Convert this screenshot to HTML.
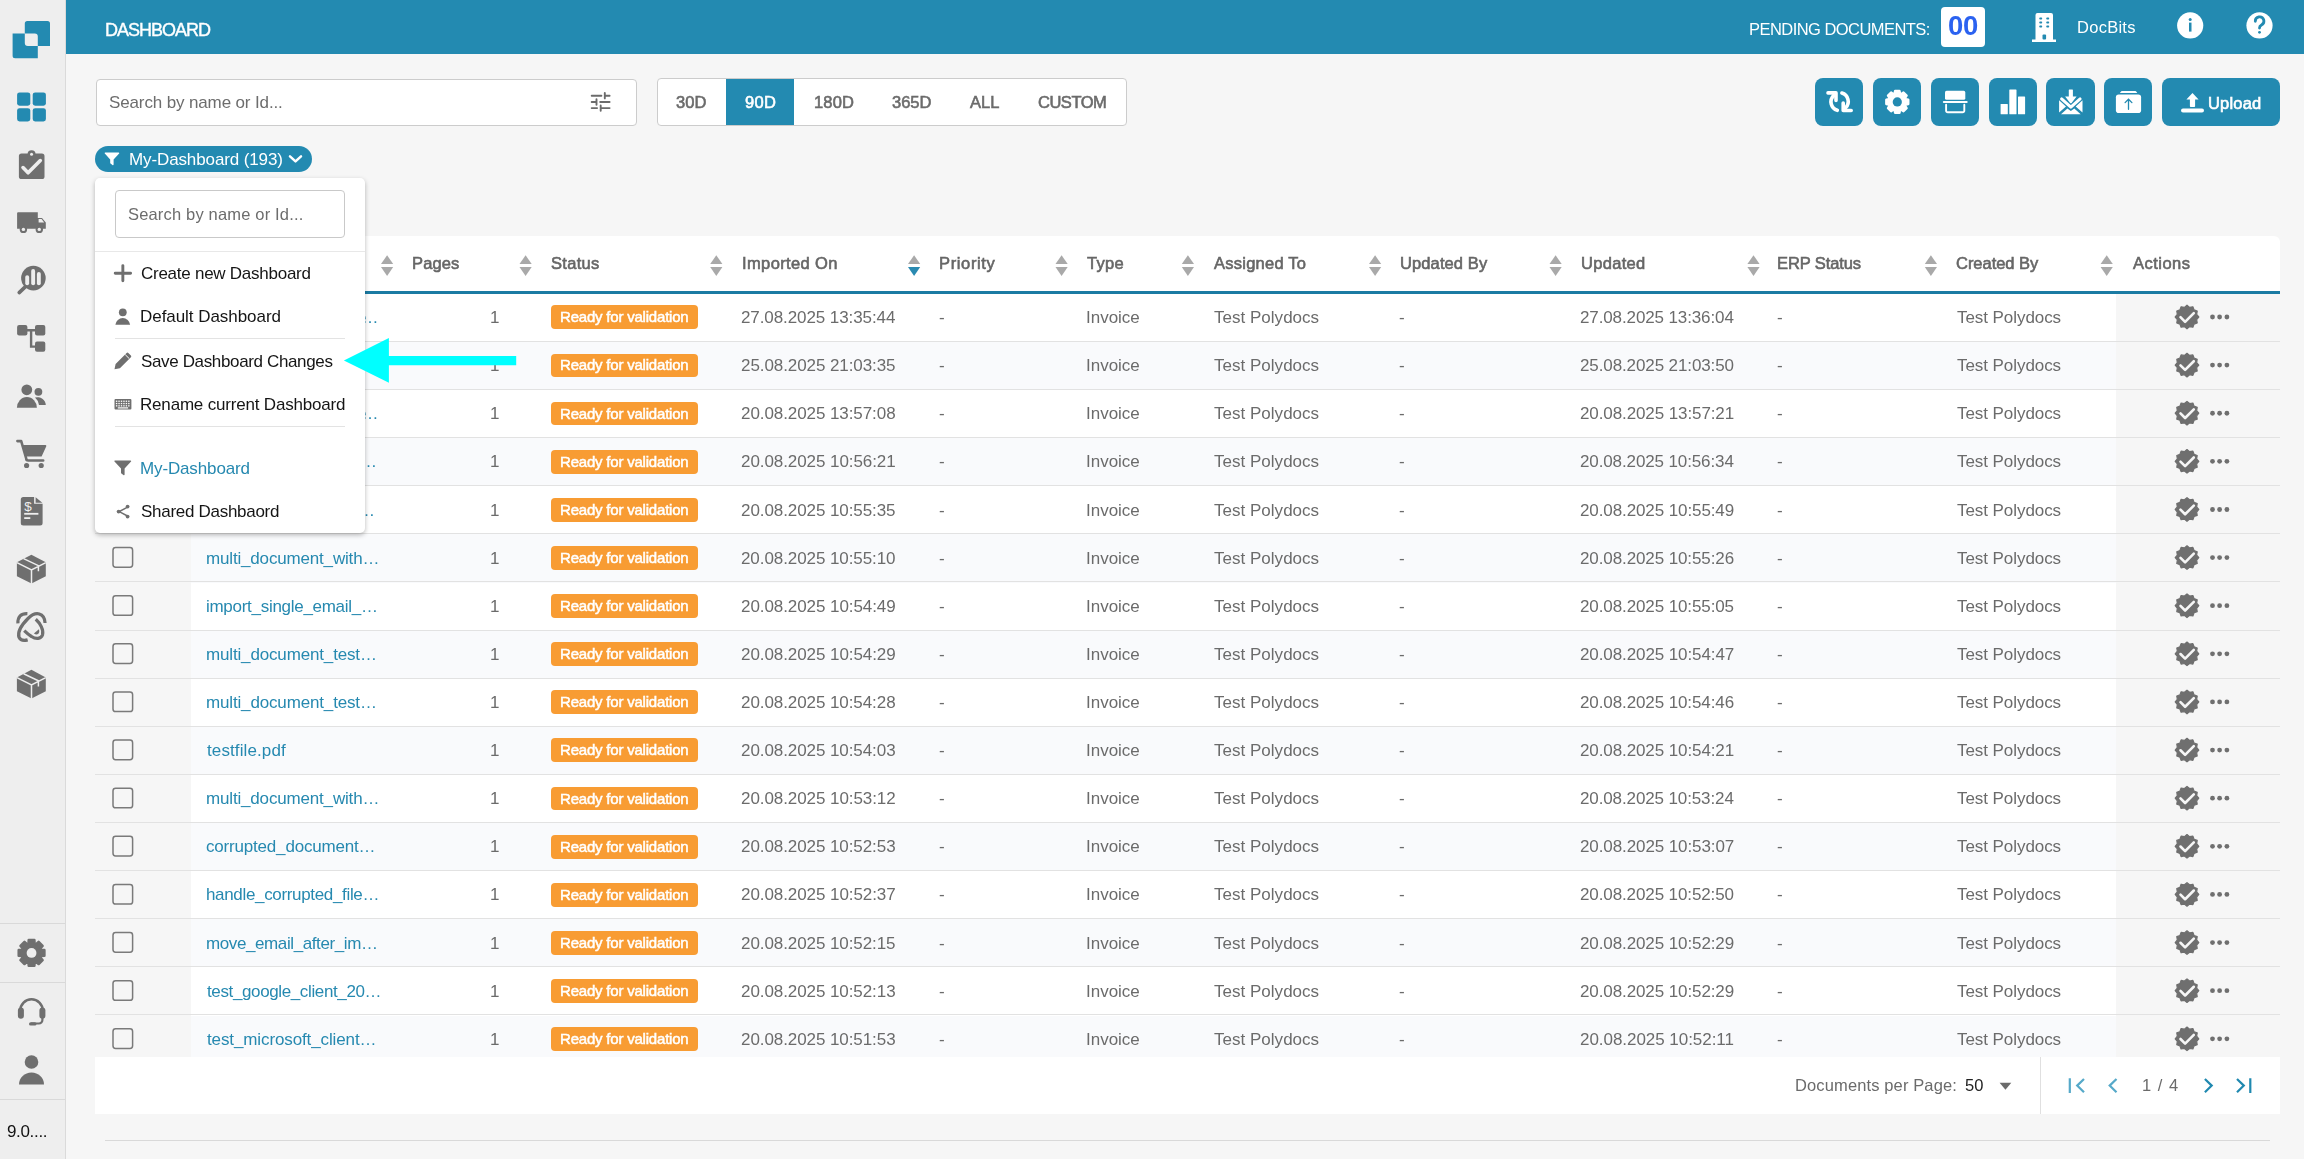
<!DOCTYPE html><html><head><meta charset="utf-8"><style>
*{box-sizing:border-box;margin:0;padding:0}
html,body{width:2304px;height:1159px;overflow:hidden}
body{background:#f6f6f6;font-family:"Liberation Sans",sans-serif;position:relative}
.a{position:absolute}
.t{position:absolute;white-space:nowrap;will-change:transform}
svg.i{position:absolute;overflow:visible;left:0;top:0}
</style></head><body>
<div class="a" style="left:0px;top:0px;width:65px;height:1159px;background:#eeeeee;"></div>
<div class="a" style="left:65px;top:0px;width:1px;height:1159px;background:#dadada;"></div>
<div class="a" style="left:0px;top:923px;width:65px;height:1px;background:#d9d9d9;"></div>
<div class="a" style="left:0px;top:982px;width:65px;height:1px;background:#d9d9d9;"></div>
<div class="a" style="left:0px;top:1099px;width:65px;height:1px;background:#d9d9d9;"></div>
<div class="a" style="left:66px;top:0px;width:2238px;height:54px;background:#238ab1;"></div>
<svg class="i" width="66" height="1159"><path fill="#238ab1" d="M24.8 23.5 a2.5 2.5 0 0 1 2.5-2.5 H47.5 a2.5 2.5 0 0 1 2.5 2.5 V46 H37.8 V36.5 a3 3 0 0 0 -3 -3 H24.8 Z"/><path fill="#238ab1" d="M12.6 33.5 H24.8 V43 a3 3 0 0 0 3 3 H37.8 V58.3 H15.1 a2.5 2.5 0 0 1 -2.5 -2.5 Z"/><rect x="17.1" y="92.4" width="13.2" height="13.3" rx="2.4" fill="#238ab1"/><rect x="17.1" y="108.2" width="13.2" height="13.3" rx="2.4" fill="#238ab1"/><rect x="32.7" y="92.4" width="13.2" height="13.3" rx="2.4" fill="#238ab1"/><rect x="32.7" y="108.2" width="13.2" height="13.3" rx="2.4" fill="#238ab1"/><rect x="18.9" y="153.4" width="25.6" height="25.6" rx="2.6" fill="#6f6f6f"/><circle cx="31.55" cy="154.2" r="4" fill="#6f6f6f"/><circle cx="31.55" cy="154.2" r="1.5" fill="#eeeeee"/><path d="M23 167.6 L28.1 172.8 L40.3 160.6" fill="none" stroke="#eeeeee" stroke-width="3.6" stroke-linecap="round" stroke-linejoin="round"/><path fill="#6f6f6f" d="M17.1 213.2 a1 1 0 0 1 1 -1 H37.8 V218 H42 L45.8 222.5 V228.8 H17.1 Z"/><path fill="#eeeeee" d="M38.6 219 H41.6 L44.2 222.6 H38.6 Z"/><circle cx="23.4" cy="229.4" r="3.7" fill="#6f6f6f"/><circle cx="23.4" cy="229.4" r="1.7" fill="#eeeeee"/><circle cx="39.3" cy="229.4" r="3.7" fill="#6f6f6f"/><circle cx="39.3" cy="229.4" r="1.7" fill="#eeeeee"/><circle cx="33.4" cy="278.1" r="12.3" fill="#6f6f6f"/><line x1="19.2" y1="292.6" x2="25.5" y2="286.6" stroke="#6f6f6f" stroke-width="3.6" stroke-linecap="round"/><line x1="27.2" y1="277.1" x2="27.2" y2="283.2" stroke="#eeeeee" stroke-width="3.9" stroke-linecap="round"/><line x1="33.15" y1="271" x2="33.15" y2="283.2" stroke="#eeeeee" stroke-width="3.9" stroke-linecap="round"/><line x1="38.85" y1="274" x2="38.85" y2="283.2" stroke="#eeeeee" stroke-width="3.9" stroke-linecap="round"/><rect x="17.1" y="325.1" width="10.3" height="10.3" rx="2" fill="#6f6f6f"/><rect x="35" y="325.1" width="10.3" height="10.3" rx="2" fill="#6f6f6f"/><rect x="35" y="341.5" width="10.3" height="10.3" rx="2" fill="#6f6f6f"/><path d="M27 330.3 H35.5 M31.1 330.3 V346.6 H35.5" fill="none" stroke="#6f6f6f" stroke-width="2.4"/><circle cx="26.8" cy="389.8" r="5.4" fill="#6f6f6f"/><path fill="#6f6f6f" d="M16.9 407.8 a10 10.8 0 0 1 20 0 Z"/><circle cx="38.4" cy="391.8" r="3.9" fill="#6f6f6f"/><path fill="#6f6f6f" d="M35 397.6 a8.2 8 0 0 1 10.8 7.4 H39 a11.8 11.8 0 0 0 -4 -7.4 Z"/><path d="M17.4 441.1 H21.2 L26.2 458.5 a2 2 0 0 0 2 2 H43.2" fill="none" stroke="#6f6f6f" stroke-width="2.6" stroke-linecap="round" stroke-linejoin="round"/><path fill="#6f6f6f" d="M22.6 445 H45.3 a1 1 0 0 1 1 1.2 L41.6 456.6 H25.6 Z"/><circle cx="26.6" cy="465.5" r="2.6" fill="#6f6f6f"/><circle cx="41.2" cy="465.5" r="2.6" fill="#6f6f6f"/><path fill="#6f6f6f" d="M23.3 496.9 H34.1 V503.8 H42.6 V523 a2.5 2.5 0 0 1 -2.5 2.5 H23.3 a2.5 2.5 0 0 1 -2.5 -2.5 V499.4 a2.5 2.5 0 0 1 2.5 -2.5 Z"/><path fill="#6f6f6f" d="M35.6 497.3 L42.3 502.8 H35.6 Z"/><text x="24.3" y="510.5" font-family="Liberation Sans" font-size="13.5" fill="#eeeeee">$</text><rect x="24.2" y="512.9" width="14.2" height="1.8" fill="#eeeeee"/><rect x="24.2" y="517.2" width="6.1" height="1.8" fill="#eeeeee"/><path fill="#6f6f6f" d="M31.4 554.7 L45.8 562.3 V576.2 L31.5 583.5 L16.9 576.2 V562.3 Z"/><path d="M16.9 562.6 L31.5 569.8 L45.8 562.6 M31.5 569.8 V584 M23.6 558.6 L38.4 565.6 V571.3" fill="none" stroke="#eeeeee" stroke-width="1.5"/><path fill="#6f6f6f" d="M31.4 669.8000000000001 L45.8 677.4 V691.3000000000001 L31.5 698.6 L16.9 691.3000000000001 V677.4 Z"/><path d="M16.9 677.7 L31.5 684.9 L45.8 677.7 M31.5 684.9 V699.1 M23.6 673.7 L38.4 680.7 V686.4" fill="none" stroke="#eeeeee" stroke-width="1.5"/><path d="M27.4 613.6 C21 613.3 17.6 616.5 17.9 623.4" fill="none" stroke="#6f6f6f" stroke-width="3.2" stroke-linecap="butt"/><path d="M45.06 622.98 C44.5 613 36 610.5 28 618.5 C22 624.5 17.3 632 19 637.3 C20.6 640.6 24.5 640.8 27.66 639.9" fill="none" stroke="#6f6f6f" stroke-width="3.2"/><path d="M35.74 619.25 C40 623 44 630 42.5 635 C41 639 36 639.5 31.5 636.5 C28 634.5 25.5 632 24.25 630.74" fill="none" stroke="#6f6f6f" stroke-width="3.2"/><path fill="#6f6f6f" d="M33.9 633.6 L38.85 629.3 C40.2 632.5 38 636.2 33.9 633.6 Z"/><path fill="#6f6f6f" stroke="#6f6f6f" stroke-width="2.6" stroke-linejoin="round" d="M41.31 949.99 L44.35 950.14 L44.35 955.76 L41.31 955.91 L40.55 957.76 L42.58 960.01 L38.61 963.98 L36.36 961.95 L34.51 962.71 L34.36 965.75 L28.74 965.75 L28.59 962.71 L26.74 961.95 L24.49 963.98 L20.52 960.01 L22.55 957.76 L21.79 955.91 L18.75 955.76 L18.75 950.14 L21.79 949.99 L22.55 948.14 L20.52 945.89 L24.49 941.92 L26.74 943.95 L28.59 943.19 L28.74 940.15 L34.36 940.15 L34.51 943.19 L36.36 943.95 L38.61 941.92 L42.58 945.89 L40.55 948.14 Z"/><circle cx="31.55" cy="952.95" r="4.9" fill="#eeeeee"/><path d="M20.3 1014 V1010.5 a11.2 11.2 0 0 1 22.4 0 V1014" fill="none" stroke="#6f6f6f" stroke-width="2.6"/><rect x="17.9" y="1007.5" width="6" height="11.2" rx="3" fill="#6f6f6f"/><rect x="39.4" y="1007.5" width="6" height="11.2" rx="3" fill="#6f6f6f"/><path d="M42.4 1017 V1020 a3.5 3.5 0 0 1 -3.5 3.5 H31" fill="none" stroke="#6f6f6f" stroke-width="2.2"/><rect x="29" y="1022.2" width="7.5" height="3.4" rx="1.7" fill="#6f6f6f"/><circle cx="31.5" cy="1062" r="6.8" fill="#6f6f6f"/><path fill="#6f6f6f" d="M19 1084.4 a12.5 12 0 0 1 25 0 Z"/></svg>
<div class="t " style="left:7.05px;top:1120px;font-size:17px;line-height:24px;color:#111111;letter-spacing:-0.338px;">9.0....</div>
<div class="t " style="left:104.72px;top:17px;font-size:18px;line-height:26px;color:#ffffff;letter-spacing:-1.010px;-webkit-text-stroke:0.4px #ffffff;">DASHBOARD</div>
<div class="t " style="left:1749.15px;top:17px;font-size:16.5px;line-height:24px;color:#ffffff;letter-spacing:-0.548px;">PENDING DOCUMENTS:</div>
<div class="a" style="left:1941px;top:7px;width:44px;height:40px;background:#ffffff;border-radius:4px"></div>
<div class="t " style="left:1947.91px;top:6px;font-size:27.5px;line-height:39px;color:#2b62f0;letter-spacing:-0.373px;font-weight:bold;">00</div>
<div class="t " style="left:2077.15px;top:15px;font-size:16.5px;line-height:24px;color:#ffffff;letter-spacing:0.267px;">DocBits</div>
<svg class="i" width="2304" height="60"><path fill="#fff" d="M2035.5 15 a2 2 0 0 1 2 -2 H2051 a2 2 0 0 1 2 2 V39.4 H2056 V41.9 H2032 V39.4 H2035.5 Z"/><rect x="2039.2" y="17.6" width="3" height="1.9" rx="0.9" fill="#238ab1"/><rect x="2046.2" y="17.6" width="3" height="1.9" rx="0.9" fill="#238ab1"/><rect x="2039.2" y="21.6" width="3" height="1.9" rx="0.9" fill="#238ab1"/><rect x="2046.2" y="21.6" width="3" height="1.9" rx="0.9" fill="#238ab1"/><rect x="2039.2" y="25.6" width="3" height="1.9" rx="0.9" fill="#238ab1"/><rect x="2046.2" y="25.6" width="3" height="1.9" rx="0.9" fill="#238ab1"/><rect x="2042.5" y="34.6" width="3.6" height="4.8" rx="1" fill="#238ab1"/><circle cx="2190.2" cy="25.4" r="13.1" fill="#fff"/><circle cx="2190.2" cy="19.6" r="1.5" fill="#238ab1"/><rect x="2189" y="22.6" width="2.5" height="9" fill="#238ab1"/><circle cx="2259.5" cy="25.4" r="13.1" fill="#fff"/><path d="M2255.3 21.3 a4.3 4.3 0 1 1 6.2 3.7 c-1.4 0.8 -2 1.5 -2 3.1" fill="none" stroke="#238ab1" stroke-width="2.8" stroke-linecap="round"/><circle cx="2259.5" cy="32.3" r="1.4" fill="#238ab1"/></svg>
<div class="a" style="left:95.5px;top:78.5px;width:541px;height:47px;background:#ffffff;border:1px solid #cccccc;border-radius:4px"></div>
<div class="t " style="left:109.23px;top:91px;font-size:17px;line-height:24px;color:#6d6d6d;letter-spacing:-0.131px;">Search by name or Id...</div>
<svg class="i" width="2304" height="140"><path d="M591.7 95.7 H601.4 M604.8 93 V98.4 M604.8 95.7 H609.6 M591.7 102 H596.5 M596.5 99.2 V104.7 M600.2 102 H609.6 M591.7 108.1 H597.1 M600.7 105.4 V110.8 M600.7 108.1 H609.6" fill="none" stroke="#6b6b6b" stroke-width="1.9" stroke-linecap="round"/></svg>
<div class="a" style="left:656.5px;top:78.2px;width:470.5px;height:47.4px;background:#ffffff;border:1px solid #cccccc;border-radius:4px"></div>
<div class="a" style="left:725.8px;top:79.2px;width:68.6px;height:45.4px;background:#238ab1;"></div>
<div class="t " style="left:676.17px;top:90px;font-size:16.5px;line-height:24px;color:#6b6b6b;letter-spacing:0.025px;-webkit-text-stroke:0.6px #6b6b6b;">30D</div>
<div class="t " style="left:744.53px;top:90px;font-size:16.5px;line-height:24px;color:#ffffff;letter-spacing:0.347px;-webkit-text-stroke:0.6px #ffffff;">90D</div>
<div class="t " style="left:813.54px;top:90px;font-size:16.5px;line-height:24px;color:#6b6b6b;letter-spacing:0.167px;-webkit-text-stroke:0.6px #6b6b6b;">180D</div>
<div class="t " style="left:892.17px;top:90px;font-size:16.5px;line-height:24px;color:#6b6b6b;letter-spacing:-0.042px;-webkit-text-stroke:0.6px #6b6b6b;">365D</div>
<div class="t " style="left:970.27px;top:90px;font-size:16.5px;line-height:24px;color:#6b6b6b;letter-spacing:0.061px;-webkit-text-stroke:0.6px #6b6b6b;">ALL</div>
<div class="t " style="left:1038.46px;top:90px;font-size:16.5px;line-height:24px;color:#6b6b6b;letter-spacing:-0.481px;-webkit-text-stroke:0.6px #6b6b6b;">CUSTOM</div>
<div class="a" style="left:1815.2px;top:78px;width:48.2px;height:48.2px;background:#238ab1;border-radius:8px"></div>
<div class="a" style="left:1873.0px;top:78px;width:48.2px;height:48.2px;background:#238ab1;border-radius:8px"></div>
<div class="a" style="left:1930.9px;top:78px;width:48.2px;height:48.2px;background:#238ab1;border-radius:8px"></div>
<div class="a" style="left:1988.7px;top:78px;width:48.2px;height:48.2px;background:#238ab1;border-radius:8px"></div>
<div class="a" style="left:2046.4px;top:78px;width:48.2px;height:48.2px;background:#238ab1;border-radius:8px"></div>
<div class="a" style="left:2104.1px;top:78px;width:48.2px;height:48.2px;background:#238ab1;border-radius:8px"></div>
<div class="a" style="left:2162px;top:78px;width:118px;height:48.2px;background:#238ab1;border-radius:8px"></div>
<svg class="i" width="2304" height="140"><path d="M1837.3 110.3 A8.8 8.8 0 0 1 1833.6 95.6" fill="none" stroke="#fff" stroke-width="3.6" stroke-linecap="round"/><path fill="#fff" d="M1828 91.1 H1836 a1.8 1.8 0 0 1 1.8 1.8 V100.4 a1.8 1.8 0 0 1 -3.6 0 V94.7 H1828 a1.8 1.8 0 0 1 0 -3.6 Z"/><g transform="rotate(180 1839.6 101.7)"><path d="M1837.3 110.3 A8.8 8.8 0 0 1 1833.6 95.6" fill="none" stroke="#fff" stroke-width="3.6" stroke-linecap="round"/><path fill="#fff" d="M1828 91.1 H1836 a1.8 1.8 0 0 1 1.8 1.8 V100.4 a1.8 1.8 0 0 1 -3.6 0 V94.7 H1828 a1.8 1.8 0 0 1 0 -3.6 Z"/></g><path fill="#fff" stroke="#fff" stroke-width="2.4" stroke-linejoin="round" d="M1894.62 93.41 L1895.11 90.92 L1899.49 90.92 L1899.98 93.41 L1901.40 94.00 L1903.52 92.59 L1906.61 95.68 L1905.20 97.80 L1905.79 99.22 L1908.28 99.71 L1908.28 104.09 L1905.79 104.58 L1905.20 106.00 L1906.61 108.12 L1903.52 111.21 L1901.40 109.80 L1899.98 110.39 L1899.49 112.88 L1895.11 112.88 L1894.62 110.39 L1893.20 109.80 L1891.08 111.21 L1887.99 108.12 L1889.40 106.00 L1888.81 104.58 L1886.32 104.09 L1886.32 99.71 L1888.81 99.22 L1889.40 97.80 L1887.99 95.68 L1891.08 92.59 L1893.20 94.00 Z"/><circle cx="1897.3" cy="101.9" r="4.6" fill="#238ab1"/><rect x="1945" y="90.8" width="20.3" height="9" rx="1.6" fill="#fff"/><rect x="1942.8" y="101" width="24.9" height="2.1" rx="1" fill="#fff"/><path d="M1946.1 104.8 V110.7 a1.6 1.6 0 0 0 1.6 1.6 H1962.7 a1.6 1.6 0 0 0 1.6 -1.6 V104.8" fill="none" stroke="#fff" stroke-width="1.9" stroke-linecap="round"/><rect x="2000.6" y="103.9" width="7.2" height="10.4" rx="0.6" fill="#fff"/><rect x="2009.3" y="89.5" width="7.2" height="24.8" rx="0.6" fill="#fff"/><rect x="2018" y="96.5" width="7.1" height="17.8" rx="0.6" fill="#fff"/><path fill="#fff" d="M2069.3 89.6 H2072.4 a0.5 0.5 0 0 1 0.5 0.5 V96.6 H2076.6 L2071.6 102.9 a1 1 0 0 1 -1.5 0 L2065.1 96.6 H2068.8 V90.1 a0.5 0.5 0 0 1 0.5 -0.5 Z"/><path d="M2061.6 98.9 L2070.85 107.2 L2080.1 98.9" fill="none" stroke="#fff" stroke-width="3" stroke-linejoin="round" stroke-linecap="round"/><path fill="#fff" d="M2059.1 100.3 L2066 106.4 L2059.1 112.6 Z M2082.5 100.3 L2075.7 106.4 L2082.5 112.6 Z M2061 114.3 L2067.4 108.4 L2070.85 111 L2074.3 108.4 L2080.7 114.3 Z"/><path fill="#fff" d="M2121.8 91 H2135.4 a1 1 0 0 1 0.8 0.4 L2137.3 93 H2119.9 L2121 91.4 a1 1 0 0 1 0.8 -0.4 Z"/><rect x="2115.9" y="94.4" width="25.2" height="18.6" rx="2.8" fill="#fff"/><path d="M2128.5 109.3 V99.4 M2125.1 102.6 L2128.5 99.2 L2131.9 102.6" fill="none" stroke="#238ab1" stroke-width="1.3" stroke-linecap="round"/><path fill="#fff" d="M2192.5 93 L2198.6 99.4 H2195.1 V106.2 a0.8 0.8 0 0 1 -0.8 0.8 H2190.7 a0.8 0.8 0 0 1 -0.8 -0.8 V99.4 H2186.4 Z"/><rect x="2181" y="108.6" width="23" height="4" rx="2" fill="#fff"/></svg>
<div class="t " style="left:2207.53px;top:91px;font-size:16.5px;line-height:24px;color:#ffffff;letter-spacing:0.190px;-webkit-text-stroke:0.6px #ffffff;">Upload</div>
<div class="a" style="left:95px;top:145.5px;width:217px;height:26.5px;background:#238ab1;border-radius:13.25px"></div>
<svg class="i" width="2304" height="200"><path fill="#fff" d="M104.6 153.2 a0.6 0.6 0 0 1 0.6 -0.6 H118.7 a0.6 0.6 0 0 1 0.45 1 L113.6 159.6 V164.4 a0.8 0.8 0 0 1 -1.2 0.6 L110.6 163.6 a0.8 0.8 0 0 1 -0.4 -0.7 V159.6 L104.8 153.6 Z"/><path d="M290 156.4 L295.5 161.4 L301 156.4" fill="none" stroke="#fff" stroke-width="2.5" stroke-linecap="round" stroke-linejoin="round"/></svg>
<div class="t " style="left:128.61px;top:148px;font-size:17px;line-height:24px;color:#ffffff;letter-spacing:-0.115px;">My-Dashboard (193)</div>
<div class="a" style="left:95px;top:235.5px;width:2185px;height:878.8px;background:#ffffff;border-radius:6px 6px 0 0"></div>
<div class="t " style="left:411.95px;top:251px;font-size:16.5px;line-height:24px;color:#666666;letter-spacing:0.141px;-webkit-text-stroke:0.6px #666666;">Pages</div>
<div class="t " style="left:550.55px;top:251px;font-size:16.5px;line-height:24px;color:#666666;letter-spacing:0.294px;-webkit-text-stroke:0.6px #666666;">Status</div>
<div class="t " style="left:741.78px;top:251px;font-size:16.5px;line-height:24px;color:#666666;letter-spacing:0.379px;-webkit-text-stroke:0.6px #666666;">Imported On</div>
<div class="t " style="left:938.95px;top:251px;font-size:16.5px;line-height:24px;color:#666666;letter-spacing:0.636px;-webkit-text-stroke:0.6px #666666;">Priority</div>
<div class="t " style="left:1086.93px;top:251px;font-size:16.5px;line-height:24px;color:#666666;letter-spacing:0.274px;-webkit-text-stroke:0.6px #666666;">Type</div>
<div class="t " style="left:1213.77px;top:251px;font-size:16.5px;line-height:24px;color:#666666;letter-spacing:0.241px;-webkit-text-stroke:0.6px #666666;">Assigned To</div>
<div class="t " style="left:1399.53px;top:251px;font-size:16.5px;line-height:24px;color:#666666;letter-spacing:0.109px;-webkit-text-stroke:0.6px #666666;">Updated By</div>
<div class="t " style="left:1580.53px;top:251px;font-size:16.5px;line-height:24px;color:#666666;letter-spacing:0.309px;-webkit-text-stroke:0.6px #666666;">Updated</div>
<div class="t " style="left:1777.45px;top:251px;font-size:16.5px;line-height:24px;color:#666666;letter-spacing:-0.104px;-webkit-text-stroke:0.6px #666666;">ERP Status</div>
<div class="t " style="left:1955.96px;top:251px;font-size:16.5px;line-height:24px;color:#666666;letter-spacing:-0.030px;-webkit-text-stroke:0.6px #666666;">Created By</div>
<div class="t " style="left:2132.77px;top:251px;font-size:16.5px;line-height:24px;color:#666666;letter-spacing:0.487px;-webkit-text-stroke:0.6px #666666;">Actions</div>
<svg class="i" width="2304" height="1159"><path fill="#a9a9a9" d="M381 264.1 L387.1 255.3 L393.2 264.1 Z"/><path fill="#a9a9a9" d="M381 267.1 L387.1 275.9 L393.2 267.1 Z"/><path fill="#a9a9a9" d="M519.5 264.1 L525.6 255.3 L531.7 264.1 Z"/><path fill="#a9a9a9" d="M519.5 267.1 L525.6 275.9 L531.7 267.1 Z"/><path fill="#a9a9a9" d="M710.2 264.1 L716.3000000000001 255.3 L722.4000000000001 264.1 Z"/><path fill="#a9a9a9" d="M710.2 267.1 L716.3000000000001 275.9 L722.4000000000001 267.1 Z"/><path fill="#a9a9a9" d="M908 264.1 L914.1 255.3 L920.2 264.1 Z"/><path fill="#2a8ab1" d="M908 267.1 L914.1 275.9 L920.2 267.1 Z"/><path fill="#a9a9a9" d="M1055.5 264.1 L1061.6 255.3 L1067.7 264.1 Z"/><path fill="#a9a9a9" d="M1055.5 267.1 L1061.6 275.9 L1067.7 267.1 Z"/><path fill="#a9a9a9" d="M1181.8 264.1 L1187.8999999999999 255.3 L1194.0 264.1 Z"/><path fill="#a9a9a9" d="M1181.8 267.1 L1187.8999999999999 275.9 L1194.0 267.1 Z"/><path fill="#a9a9a9" d="M1369 264.1 L1375.1 255.3 L1381.2 264.1 Z"/><path fill="#a9a9a9" d="M1369 267.1 L1375.1 275.9 L1381.2 267.1 Z"/><path fill="#a9a9a9" d="M1549.5 264.1 L1555.6 255.3 L1561.7 264.1 Z"/><path fill="#a9a9a9" d="M1549.5 267.1 L1555.6 275.9 L1561.7 267.1 Z"/><path fill="#a9a9a9" d="M1747.4 264.1 L1753.5 255.3 L1759.6000000000001 264.1 Z"/><path fill="#a9a9a9" d="M1747.4 267.1 L1753.5 275.9 L1759.6000000000001 267.1 Z"/><path fill="#a9a9a9" d="M1924.8 264.1 L1930.8999999999999 255.3 L1937.0 264.1 Z"/><path fill="#a9a9a9" d="M1924.8 267.1 L1930.8999999999999 275.9 L1937.0 267.1 Z"/><path fill="#a9a9a9" d="M2100.6 264.1 L2106.7 255.3 L2112.7999999999997 264.1 Z"/><path fill="#a9a9a9" d="M2100.6 267.1 L2106.7 275.9 L2112.7999999999997 267.1 Z"/></svg>
<div class="a" style="left:95px;top:291px;width:2185px;height:3px;background:#1b7ba3;"></div>
<div class="a" style="left:95px;top:294px;width:2185px;height:762.5px;overflow:hidden">
<div class="a" style="left:0;top:-0.20px;width:2185px;height:48.12px;background:#ffffff"></div>
<div class="a" style="left:0;top:-0.20px;width:96px;height:48.12px;background:#f6f6f6"></div>
<div class="a" style="left:2021px;top:-0.20px;width:164px;height:48.12px;background:#f6f6f6"></div>
<div class="a" style="left:0;top:46.80px;width:2185px;height:1px;background:#e2e2e2"></div>
<div class="a" style="left:0;top:47.92px;width:2185px;height:48.12px;background:#f9fafc"></div>
<div class="a" style="left:0;top:47.92px;width:96px;height:48.12px;background:#f6f6f6"></div>
<div class="a" style="left:2021px;top:47.92px;width:164px;height:48.12px;background:#f6f6f6"></div>
<div class="a" style="left:0;top:94.92px;width:2185px;height:1px;background:#e2e2e2"></div>
<div class="a" style="left:0;top:96.04px;width:2185px;height:48.12px;background:#ffffff"></div>
<div class="a" style="left:0;top:96.04px;width:96px;height:48.12px;background:#f6f6f6"></div>
<div class="a" style="left:2021px;top:96.04px;width:164px;height:48.12px;background:#f6f6f6"></div>
<div class="a" style="left:0;top:143.04px;width:2185px;height:1px;background:#e2e2e2"></div>
<div class="a" style="left:0;top:144.16px;width:2185px;height:48.12px;background:#f9fafc"></div>
<div class="a" style="left:0;top:144.16px;width:96px;height:48.12px;background:#f6f6f6"></div>
<div class="a" style="left:2021px;top:144.16px;width:164px;height:48.12px;background:#f6f6f6"></div>
<div class="a" style="left:0;top:191.16px;width:2185px;height:1px;background:#e2e2e2"></div>
<div class="a" style="left:0;top:192.28px;width:2185px;height:48.12px;background:#ffffff"></div>
<div class="a" style="left:0;top:192.28px;width:96px;height:48.12px;background:#f6f6f6"></div>
<div class="a" style="left:2021px;top:192.28px;width:164px;height:48.12px;background:#f6f6f6"></div>
<div class="a" style="left:0;top:239.28px;width:2185px;height:1px;background:#e2e2e2"></div>
<div class="a" style="left:0;top:240.40px;width:2185px;height:48.12px;background:#f9fafc"></div>
<div class="a" style="left:0;top:240.40px;width:96px;height:48.12px;background:#f6f6f6"></div>
<div class="a" style="left:2021px;top:240.40px;width:164px;height:48.12px;background:#f6f6f6"></div>
<div class="a" style="left:0;top:287.40px;width:2185px;height:1px;background:#e2e2e2"></div>
<div class="a" style="left:0;top:288.52px;width:2185px;height:48.12px;background:#ffffff"></div>
<div class="a" style="left:0;top:288.52px;width:96px;height:48.12px;background:#f6f6f6"></div>
<div class="a" style="left:2021px;top:288.52px;width:164px;height:48.12px;background:#f6f6f6"></div>
<div class="a" style="left:0;top:335.52px;width:2185px;height:1px;background:#e2e2e2"></div>
<div class="a" style="left:0;top:336.64px;width:2185px;height:48.12px;background:#f9fafc"></div>
<div class="a" style="left:0;top:336.64px;width:96px;height:48.12px;background:#f6f6f6"></div>
<div class="a" style="left:2021px;top:336.64px;width:164px;height:48.12px;background:#f6f6f6"></div>
<div class="a" style="left:0;top:383.64px;width:2185px;height:1px;background:#e2e2e2"></div>
<div class="a" style="left:0;top:384.76px;width:2185px;height:48.12px;background:#ffffff"></div>
<div class="a" style="left:0;top:384.76px;width:96px;height:48.12px;background:#f6f6f6"></div>
<div class="a" style="left:2021px;top:384.76px;width:164px;height:48.12px;background:#f6f6f6"></div>
<div class="a" style="left:0;top:431.76px;width:2185px;height:1px;background:#e2e2e2"></div>
<div class="a" style="left:0;top:432.88px;width:2185px;height:48.12px;background:#f9fafc"></div>
<div class="a" style="left:0;top:432.88px;width:96px;height:48.12px;background:#f6f6f6"></div>
<div class="a" style="left:2021px;top:432.88px;width:164px;height:48.12px;background:#f6f6f6"></div>
<div class="a" style="left:0;top:479.88px;width:2185px;height:1px;background:#e2e2e2"></div>
<div class="a" style="left:0;top:481.00px;width:2185px;height:48.12px;background:#ffffff"></div>
<div class="a" style="left:0;top:481.00px;width:96px;height:48.12px;background:#f6f6f6"></div>
<div class="a" style="left:2021px;top:481.00px;width:164px;height:48.12px;background:#f6f6f6"></div>
<div class="a" style="left:0;top:528.00px;width:2185px;height:1px;background:#e2e2e2"></div>
<div class="a" style="left:0;top:529.12px;width:2185px;height:48.12px;background:#f9fafc"></div>
<div class="a" style="left:0;top:529.12px;width:96px;height:48.12px;background:#f6f6f6"></div>
<div class="a" style="left:2021px;top:529.12px;width:164px;height:48.12px;background:#f6f6f6"></div>
<div class="a" style="left:0;top:576.12px;width:2185px;height:1px;background:#e2e2e2"></div>
<div class="a" style="left:0;top:577.24px;width:2185px;height:48.12px;background:#ffffff"></div>
<div class="a" style="left:0;top:577.24px;width:96px;height:48.12px;background:#f6f6f6"></div>
<div class="a" style="left:2021px;top:577.24px;width:164px;height:48.12px;background:#f6f6f6"></div>
<div class="a" style="left:0;top:624.24px;width:2185px;height:1px;background:#e2e2e2"></div>
<div class="a" style="left:0;top:625.36px;width:2185px;height:48.12px;background:#f9fafc"></div>
<div class="a" style="left:0;top:625.36px;width:96px;height:48.12px;background:#f6f6f6"></div>
<div class="a" style="left:2021px;top:625.36px;width:164px;height:48.12px;background:#f6f6f6"></div>
<div class="a" style="left:0;top:672.36px;width:2185px;height:1px;background:#e2e2e2"></div>
<div class="a" style="left:0;top:673.48px;width:2185px;height:48.12px;background:#ffffff"></div>
<div class="a" style="left:0;top:673.48px;width:96px;height:48.12px;background:#f6f6f6"></div>
<div class="a" style="left:2021px;top:673.48px;width:164px;height:48.12px;background:#f6f6f6"></div>
<div class="a" style="left:0;top:720.48px;width:2185px;height:1px;background:#e2e2e2"></div>
<div class="a" style="left:0;top:721.60px;width:2185px;height:48.12px;background:#f9fafc"></div>
<div class="a" style="left:0;top:721.60px;width:96px;height:48.12px;background:#f6f6f6"></div>
<div class="a" style="left:2021px;top:721.60px;width:164px;height:48.12px;background:#f6f6f6"></div>
</div>
<div class="t " style="left:490.21px;top:306px;font-size:17px;line-height:24px;color:#6b6b6b;letter-spacing:0.000px;">1</div>
<div class="a" style="left:550.7px;top:305.4px;width:147.2px;height:23.8px;background:#f89c33;border-radius:4px"></div>
<div class="t " style="left:559.52px;top:306px;font-size:15px;line-height:21px;color:#ffffff;letter-spacing:-0.204px;-webkit-text-stroke:0.5px #ffffff;">Ready for validation</div>
<div class="t " style="left:740.65px;top:306px;font-size:17px;line-height:24px;color:#6b6b6b;letter-spacing:-0.090px;">27.08.2025 13:35:44</div>
<div class="t " style="left:939.24px;top:306px;font-size:17px;line-height:24px;color:#6b6b6b;letter-spacing:0.000px;">-</div>
<div class="t " style="left:1086.43px;top:306px;font-size:17px;line-height:24px;color:#6b6b6b;letter-spacing:-0.007px;">Invoice</div>
<div class="t " style="left:1213.62px;top:306px;font-size:17px;line-height:24px;color:#6b6b6b;letter-spacing:0.019px;">Test Polydocs</div>
<div class="t " style="left:1399.24px;top:306px;font-size:17px;line-height:24px;color:#6b6b6b;letter-spacing:0.000px;">-</div>
<div class="t " style="left:1580.15px;top:306px;font-size:17px;line-height:24px;color:#6b6b6b;letter-spacing:-0.118px;">27.08.2025 13:36:04</div>
<div class="t " style="left:1777.24px;top:306px;font-size:17px;line-height:24px;color:#6b6b6b;letter-spacing:0.000px;">-</div>
<div class="t " style="left:1956.62px;top:306px;font-size:17px;line-height:24px;color:#6b6b6b;letter-spacing:-0.064px;">Test Polydocs</div>
<div class="t " style="left:490.21px;top:354px;font-size:17px;line-height:24px;color:#6b6b6b;letter-spacing:0.000px;">1</div>
<div class="a" style="left:550.7px;top:353.52px;width:147.2px;height:23.8px;background:#f89c33;border-radius:4px"></div>
<div class="t " style="left:559.52px;top:354px;font-size:15px;line-height:21px;color:#ffffff;letter-spacing:-0.204px;-webkit-text-stroke:0.5px #ffffff;">Ready for validation</div>
<div class="t " style="left:740.65px;top:354px;font-size:17px;line-height:24px;color:#6b6b6b;letter-spacing:-0.078px;">25.08.2025 21:03:35</div>
<div class="t " style="left:939.24px;top:354px;font-size:17px;line-height:24px;color:#6b6b6b;letter-spacing:0.000px;">-</div>
<div class="t " style="left:1086.43px;top:354px;font-size:17px;line-height:24px;color:#6b6b6b;letter-spacing:-0.007px;">Invoice</div>
<div class="t " style="left:1213.62px;top:354px;font-size:17px;line-height:24px;color:#6b6b6b;letter-spacing:0.019px;">Test Polydocs</div>
<div class="t " style="left:1399.24px;top:354px;font-size:17px;line-height:24px;color:#6b6b6b;letter-spacing:0.000px;">-</div>
<div class="t " style="left:1580.15px;top:354px;font-size:17px;line-height:24px;color:#6b6b6b;letter-spacing:-0.109px;">25.08.2025 21:03:50</div>
<div class="t " style="left:1777.24px;top:354px;font-size:17px;line-height:24px;color:#6b6b6b;letter-spacing:0.000px;">-</div>
<div class="t " style="left:1956.62px;top:354px;font-size:17px;line-height:24px;color:#6b6b6b;letter-spacing:-0.064px;">Test Polydocs</div>
<div class="t " style="left:490.21px;top:402px;font-size:17px;line-height:24px;color:#6b6b6b;letter-spacing:0.000px;">1</div>
<div class="a" style="left:550.7px;top:401.64px;width:147.2px;height:23.8px;background:#f89c33;border-radius:4px"></div>
<div class="t " style="left:559.52px;top:403px;font-size:15px;line-height:21px;color:#ffffff;letter-spacing:-0.204px;-webkit-text-stroke:0.5px #ffffff;">Ready for validation</div>
<div class="t " style="left:740.65px;top:402px;font-size:17px;line-height:24px;color:#6b6b6b;letter-spacing:-0.077px;">20.08.2025 13:57:08</div>
<div class="t " style="left:939.24px;top:402px;font-size:17px;line-height:24px;color:#6b6b6b;letter-spacing:0.000px;">-</div>
<div class="t " style="left:1086.43px;top:402px;font-size:17px;line-height:24px;color:#6b6b6b;letter-spacing:-0.007px;">Invoice</div>
<div class="t " style="left:1213.62px;top:402px;font-size:17px;line-height:24px;color:#6b6b6b;letter-spacing:0.019px;">Test Polydocs</div>
<div class="t " style="left:1399.24px;top:402px;font-size:17px;line-height:24px;color:#6b6b6b;letter-spacing:0.000px;">-</div>
<div class="t " style="left:1580.15px;top:402px;font-size:17px;line-height:24px;color:#6b6b6b;letter-spacing:-0.100px;">20.08.2025 13:57:21</div>
<div class="t " style="left:1777.24px;top:402px;font-size:17px;line-height:24px;color:#6b6b6b;letter-spacing:0.000px;">-</div>
<div class="t " style="left:1956.62px;top:402px;font-size:17px;line-height:24px;color:#6b6b6b;letter-spacing:-0.064px;">Test Polydocs</div>
<div class="t " style="left:490.21px;top:450px;font-size:17px;line-height:24px;color:#6b6b6b;letter-spacing:0.000px;">1</div>
<div class="a" style="left:550.7px;top:449.76px;width:147.2px;height:23.8px;background:#f89c33;border-radius:4px"></div>
<div class="t " style="left:559.52px;top:451px;font-size:15px;line-height:21px;color:#ffffff;letter-spacing:-0.204px;-webkit-text-stroke:0.5px #ffffff;">Ready for validation</div>
<div class="t " style="left:740.65px;top:450px;font-size:17px;line-height:24px;color:#6b6b6b;letter-spacing:-0.072px;">20.08.2025 10:56:21</div>
<div class="t " style="left:939.24px;top:450px;font-size:17px;line-height:24px;color:#6b6b6b;letter-spacing:0.000px;">-</div>
<div class="t " style="left:1086.43px;top:450px;font-size:17px;line-height:24px;color:#6b6b6b;letter-spacing:-0.007px;">Invoice</div>
<div class="t " style="left:1213.62px;top:450px;font-size:17px;line-height:24px;color:#6b6b6b;letter-spacing:0.019px;">Test Polydocs</div>
<div class="t " style="left:1399.24px;top:450px;font-size:17px;line-height:24px;color:#6b6b6b;letter-spacing:0.000px;">-</div>
<div class="t " style="left:1580.15px;top:450px;font-size:17px;line-height:24px;color:#6b6b6b;letter-spacing:-0.118px;">20.08.2025 10:56:34</div>
<div class="t " style="left:1777.24px;top:450px;font-size:17px;line-height:24px;color:#6b6b6b;letter-spacing:0.000px;">-</div>
<div class="t " style="left:1956.62px;top:450px;font-size:17px;line-height:24px;color:#6b6b6b;letter-spacing:-0.064px;">Test Polydocs</div>
<div class="t " style="left:490.21px;top:499px;font-size:17px;line-height:24px;color:#6b6b6b;letter-spacing:0.000px;">1</div>
<div class="a" style="left:550.7px;top:497.88px;width:147.2px;height:23.8px;background:#f89c33;border-radius:4px"></div>
<div class="t " style="left:559.52px;top:499px;font-size:15px;line-height:21px;color:#ffffff;letter-spacing:-0.204px;-webkit-text-stroke:0.5px #ffffff;">Ready for validation</div>
<div class="t " style="left:740.65px;top:499px;font-size:17px;line-height:24px;color:#6b6b6b;letter-spacing:-0.078px;">20.08.2025 10:55:35</div>
<div class="t " style="left:939.24px;top:499px;font-size:17px;line-height:24px;color:#6b6b6b;letter-spacing:0.000px;">-</div>
<div class="t " style="left:1086.43px;top:499px;font-size:17px;line-height:24px;color:#6b6b6b;letter-spacing:-0.007px;">Invoice</div>
<div class="t " style="left:1213.62px;top:499px;font-size:17px;line-height:24px;color:#6b6b6b;letter-spacing:0.019px;">Test Polydocs</div>
<div class="t " style="left:1399.24px;top:499px;font-size:17px;line-height:24px;color:#6b6b6b;letter-spacing:0.000px;">-</div>
<div class="t " style="left:1580.15px;top:499px;font-size:17px;line-height:24px;color:#6b6b6b;letter-spacing:-0.101px;">20.08.2025 10:55:49</div>
<div class="t " style="left:1777.24px;top:499px;font-size:17px;line-height:24px;color:#6b6b6b;letter-spacing:0.000px;">-</div>
<div class="t " style="left:1956.62px;top:499px;font-size:17px;line-height:24px;color:#6b6b6b;letter-spacing:-0.064px;">Test Polydocs</div>
<div class="t " style="left:205.87px;top:547px;font-size:17px;line-height:24px;color:#2689b0;letter-spacing:-0.171px;">multi_document_with…</div>
<div class="t " style="left:490.21px;top:547px;font-size:17px;line-height:24px;color:#6b6b6b;letter-spacing:0.000px;">1</div>
<div class="a" style="left:550.7px;top:546.0px;width:147.2px;height:23.8px;background:#f89c33;border-radius:4px"></div>
<div class="t " style="left:559.52px;top:547px;font-size:15px;line-height:21px;color:#ffffff;letter-spacing:-0.204px;-webkit-text-stroke:0.5px #ffffff;">Ready for validation</div>
<div class="t " style="left:740.65px;top:547px;font-size:17px;line-height:24px;color:#6b6b6b;letter-spacing:-0.081px;">20.08.2025 10:55:10</div>
<div class="t " style="left:939.24px;top:547px;font-size:17px;line-height:24px;color:#6b6b6b;letter-spacing:0.000px;">-</div>
<div class="t " style="left:1086.43px;top:547px;font-size:17px;line-height:24px;color:#6b6b6b;letter-spacing:-0.007px;">Invoice</div>
<div class="t " style="left:1213.62px;top:547px;font-size:17px;line-height:24px;color:#6b6b6b;letter-spacing:0.019px;">Test Polydocs</div>
<div class="t " style="left:1399.24px;top:547px;font-size:17px;line-height:24px;color:#6b6b6b;letter-spacing:0.000px;">-</div>
<div class="t " style="left:1580.15px;top:547px;font-size:17px;line-height:24px;color:#6b6b6b;letter-spacing:-0.104px;">20.08.2025 10:55:26</div>
<div class="t " style="left:1777.24px;top:547px;font-size:17px;line-height:24px;color:#6b6b6b;letter-spacing:0.000px;">-</div>
<div class="t " style="left:1956.62px;top:547px;font-size:17px;line-height:24px;color:#6b6b6b;letter-spacing:-0.064px;">Test Polydocs</div>
<div class="t " style="left:205.86px;top:595px;font-size:17px;line-height:24px;color:#2689b0;letter-spacing:-0.285px;">import_single_email_…</div>
<div class="t " style="left:490.21px;top:595px;font-size:17px;line-height:24px;color:#6b6b6b;letter-spacing:0.000px;">1</div>
<div class="a" style="left:550.7px;top:594.12px;width:147.2px;height:23.8px;background:#f89c33;border-radius:4px"></div>
<div class="t " style="left:559.52px;top:595px;font-size:15px;line-height:21px;color:#ffffff;letter-spacing:-0.204px;-webkit-text-stroke:0.5px #ffffff;">Ready for validation</div>
<div class="t " style="left:740.65px;top:595px;font-size:17px;line-height:24px;color:#6b6b6b;letter-spacing:-0.073px;">20.08.2025 10:54:49</div>
<div class="t " style="left:939.24px;top:595px;font-size:17px;line-height:24px;color:#6b6b6b;letter-spacing:0.000px;">-</div>
<div class="t " style="left:1086.43px;top:595px;font-size:17px;line-height:24px;color:#6b6b6b;letter-spacing:-0.007px;">Invoice</div>
<div class="t " style="left:1213.62px;top:595px;font-size:17px;line-height:24px;color:#6b6b6b;letter-spacing:0.019px;">Test Polydocs</div>
<div class="t " style="left:1399.24px;top:595px;font-size:17px;line-height:24px;color:#6b6b6b;letter-spacing:0.000px;">-</div>
<div class="t " style="left:1580.15px;top:595px;font-size:17px;line-height:24px;color:#6b6b6b;letter-spacing:-0.106px;">20.08.2025 10:55:05</div>
<div class="t " style="left:1777.24px;top:595px;font-size:17px;line-height:24px;color:#6b6b6b;letter-spacing:0.000px;">-</div>
<div class="t " style="left:1956.62px;top:595px;font-size:17px;line-height:24px;color:#6b6b6b;letter-spacing:-0.064px;">Test Polydocs</div>
<div class="t " style="left:205.87px;top:643px;font-size:17px;line-height:24px;color:#2689b0;letter-spacing:-0.154px;">multi_document_test…</div>
<div class="t " style="left:490.21px;top:643px;font-size:17px;line-height:24px;color:#6b6b6b;letter-spacing:0.000px;">1</div>
<div class="a" style="left:550.7px;top:642.24px;width:147.2px;height:23.8px;background:#f89c33;border-radius:4px"></div>
<div class="t " style="left:559.52px;top:643px;font-size:15px;line-height:21px;color:#ffffff;letter-spacing:-0.204px;-webkit-text-stroke:0.5px #ffffff;">Ready for validation</div>
<div class="t " style="left:740.65px;top:643px;font-size:17px;line-height:24px;color:#6b6b6b;letter-spacing:-0.073px;">20.08.2025 10:54:29</div>
<div class="t " style="left:939.24px;top:643px;font-size:17px;line-height:24px;color:#6b6b6b;letter-spacing:0.000px;">-</div>
<div class="t " style="left:1086.43px;top:643px;font-size:17px;line-height:24px;color:#6b6b6b;letter-spacing:-0.007px;">Invoice</div>
<div class="t " style="left:1213.62px;top:643px;font-size:17px;line-height:24px;color:#6b6b6b;letter-spacing:0.019px;">Test Polydocs</div>
<div class="t " style="left:1399.24px;top:643px;font-size:17px;line-height:24px;color:#6b6b6b;letter-spacing:0.000px;">-</div>
<div class="t " style="left:1580.15px;top:643px;font-size:17px;line-height:24px;color:#6b6b6b;letter-spacing:-0.098px;">20.08.2025 10:54:47</div>
<div class="t " style="left:1777.24px;top:643px;font-size:17px;line-height:24px;color:#6b6b6b;letter-spacing:0.000px;">-</div>
<div class="t " style="left:1956.62px;top:643px;font-size:17px;line-height:24px;color:#6b6b6b;letter-spacing:-0.064px;">Test Polydocs</div>
<div class="t " style="left:205.87px;top:691px;font-size:17px;line-height:24px;color:#2689b0;letter-spacing:-0.154px;">multi_document_test…</div>
<div class="t " style="left:490.21px;top:691px;font-size:17px;line-height:24px;color:#6b6b6b;letter-spacing:0.000px;">1</div>
<div class="a" style="left:550.7px;top:690.36px;width:147.2px;height:23.8px;background:#f89c33;border-radius:4px"></div>
<div class="t " style="left:559.52px;top:691px;font-size:15px;line-height:21px;color:#ffffff;letter-spacing:-0.204px;-webkit-text-stroke:0.5px #ffffff;">Ready for validation</div>
<div class="t " style="left:740.65px;top:691px;font-size:17px;line-height:24px;color:#6b6b6b;letter-spacing:-0.077px;">20.08.2025 10:54:28</div>
<div class="t " style="left:939.24px;top:691px;font-size:17px;line-height:24px;color:#6b6b6b;letter-spacing:0.000px;">-</div>
<div class="t " style="left:1086.43px;top:691px;font-size:17px;line-height:24px;color:#6b6b6b;letter-spacing:-0.007px;">Invoice</div>
<div class="t " style="left:1213.62px;top:691px;font-size:17px;line-height:24px;color:#6b6b6b;letter-spacing:0.019px;">Test Polydocs</div>
<div class="t " style="left:1399.24px;top:691px;font-size:17px;line-height:24px;color:#6b6b6b;letter-spacing:0.000px;">-</div>
<div class="t " style="left:1580.15px;top:691px;font-size:17px;line-height:24px;color:#6b6b6b;letter-spacing:-0.104px;">20.08.2025 10:54:46</div>
<div class="t " style="left:1777.24px;top:691px;font-size:17px;line-height:24px;color:#6b6b6b;letter-spacing:0.000px;">-</div>
<div class="t " style="left:1956.62px;top:691px;font-size:17px;line-height:24px;color:#6b6b6b;letter-spacing:-0.064px;">Test Polydocs</div>
<div class="t " style="left:206.74px;top:739px;font-size:17px;line-height:24px;color:#2689b0;letter-spacing:0.113px;">testfile.pdf</div>
<div class="t " style="left:490.21px;top:739px;font-size:17px;line-height:24px;color:#6b6b6b;letter-spacing:0.000px;">1</div>
<div class="a" style="left:550.7px;top:738.48px;width:147.2px;height:23.8px;background:#f89c33;border-radius:4px"></div>
<div class="t " style="left:559.52px;top:739px;font-size:15px;line-height:21px;color:#ffffff;letter-spacing:-0.204px;-webkit-text-stroke:0.5px #ffffff;">Ready for validation</div>
<div class="t " style="left:740.65px;top:739px;font-size:17px;line-height:24px;color:#6b6b6b;letter-spacing:-0.077px;">20.08.2025 10:54:03</div>
<div class="t " style="left:939.24px;top:739px;font-size:17px;line-height:24px;color:#6b6b6b;letter-spacing:0.000px;">-</div>
<div class="t " style="left:1086.43px;top:739px;font-size:17px;line-height:24px;color:#6b6b6b;letter-spacing:-0.007px;">Invoice</div>
<div class="t " style="left:1213.62px;top:739px;font-size:17px;line-height:24px;color:#6b6b6b;letter-spacing:0.019px;">Test Polydocs</div>
<div class="t " style="left:1399.24px;top:739px;font-size:17px;line-height:24px;color:#6b6b6b;letter-spacing:0.000px;">-</div>
<div class="t " style="left:1580.15px;top:739px;font-size:17px;line-height:24px;color:#6b6b6b;letter-spacing:-0.100px;">20.08.2025 10:54:21</div>
<div class="t " style="left:1777.24px;top:739px;font-size:17px;line-height:24px;color:#6b6b6b;letter-spacing:0.000px;">-</div>
<div class="t " style="left:1956.62px;top:739px;font-size:17px;line-height:24px;color:#6b6b6b;letter-spacing:-0.064px;">Test Polydocs</div>
<div class="t " style="left:205.87px;top:787px;font-size:17px;line-height:24px;color:#2689b0;letter-spacing:-0.171px;">multi_document_with…</div>
<div class="t " style="left:490.21px;top:787px;font-size:17px;line-height:24px;color:#6b6b6b;letter-spacing:0.000px;">1</div>
<div class="a" style="left:550.7px;top:786.6px;width:147.2px;height:23.8px;background:#f89c33;border-radius:4px"></div>
<div class="t " style="left:559.52px;top:788px;font-size:15px;line-height:21px;color:#ffffff;letter-spacing:-0.204px;-webkit-text-stroke:0.5px #ffffff;">Ready for validation</div>
<div class="t " style="left:740.65px;top:787px;font-size:17px;line-height:24px;color:#6b6b6b;letter-spacing:-0.071px;">20.08.2025 10:53:12</div>
<div class="t " style="left:939.24px;top:787px;font-size:17px;line-height:24px;color:#6b6b6b;letter-spacing:0.000px;">-</div>
<div class="t " style="left:1086.43px;top:787px;font-size:17px;line-height:24px;color:#6b6b6b;letter-spacing:-0.007px;">Invoice</div>
<div class="t " style="left:1213.62px;top:787px;font-size:17px;line-height:24px;color:#6b6b6b;letter-spacing:0.019px;">Test Polydocs</div>
<div class="t " style="left:1399.24px;top:787px;font-size:17px;line-height:24px;color:#6b6b6b;letter-spacing:0.000px;">-</div>
<div class="t " style="left:1580.15px;top:787px;font-size:17px;line-height:24px;color:#6b6b6b;letter-spacing:-0.118px;">20.08.2025 10:53:24</div>
<div class="t " style="left:1777.24px;top:787px;font-size:17px;line-height:24px;color:#6b6b6b;letter-spacing:0.000px;">-</div>
<div class="t " style="left:1956.62px;top:787px;font-size:17px;line-height:24px;color:#6b6b6b;letter-spacing:-0.064px;">Test Polydocs</div>
<div class="t " style="left:206.28px;top:835px;font-size:17px;line-height:24px;color:#2689b0;letter-spacing:-0.189px;">corrupted_document…</div>
<div class="t " style="left:490.21px;top:835px;font-size:17px;line-height:24px;color:#6b6b6b;letter-spacing:0.000px;">1</div>
<div class="a" style="left:550.7px;top:834.72px;width:147.2px;height:23.8px;background:#f89c33;border-radius:4px"></div>
<div class="t " style="left:559.52px;top:836px;font-size:15px;line-height:21px;color:#ffffff;letter-spacing:-0.204px;-webkit-text-stroke:0.5px #ffffff;">Ready for validation</div>
<div class="t " style="left:740.65px;top:835px;font-size:17px;line-height:24px;color:#6b6b6b;letter-spacing:-0.077px;">20.08.2025 10:52:53</div>
<div class="t " style="left:939.24px;top:835px;font-size:17px;line-height:24px;color:#6b6b6b;letter-spacing:0.000px;">-</div>
<div class="t " style="left:1086.43px;top:835px;font-size:17px;line-height:24px;color:#6b6b6b;letter-spacing:-0.007px;">Invoice</div>
<div class="t " style="left:1213.62px;top:835px;font-size:17px;line-height:24px;color:#6b6b6b;letter-spacing:0.019px;">Test Polydocs</div>
<div class="t " style="left:1399.24px;top:835px;font-size:17px;line-height:24px;color:#6b6b6b;letter-spacing:0.000px;">-</div>
<div class="t " style="left:1580.15px;top:835px;font-size:17px;line-height:24px;color:#6b6b6b;letter-spacing:-0.098px;">20.08.2025 10:53:07</div>
<div class="t " style="left:1777.24px;top:835px;font-size:17px;line-height:24px;color:#6b6b6b;letter-spacing:0.000px;">-</div>
<div class="t " style="left:1956.62px;top:835px;font-size:17px;line-height:24px;color:#6b6b6b;letter-spacing:-0.064px;">Test Polydocs</div>
<div class="t " style="left:205.82px;top:883px;font-size:17px;line-height:24px;color:#2689b0;letter-spacing:-0.334px;">handle_corrupted_file…</div>
<div class="t " style="left:490.21px;top:883px;font-size:17px;line-height:24px;color:#6b6b6b;letter-spacing:0.000px;">1</div>
<div class="a" style="left:550.7px;top:882.84px;width:147.2px;height:23.8px;background:#f89c33;border-radius:4px"></div>
<div class="t " style="left:559.52px;top:884px;font-size:15px;line-height:21px;color:#ffffff;letter-spacing:-0.204px;-webkit-text-stroke:0.5px #ffffff;">Ready for validation</div>
<div class="t " style="left:740.65px;top:883px;font-size:17px;line-height:24px;color:#6b6b6b;letter-spacing:-0.071px;">20.08.2025 10:52:37</div>
<div class="t " style="left:939.24px;top:883px;font-size:17px;line-height:24px;color:#6b6b6b;letter-spacing:0.000px;">-</div>
<div class="t " style="left:1086.43px;top:883px;font-size:17px;line-height:24px;color:#6b6b6b;letter-spacing:-0.007px;">Invoice</div>
<div class="t " style="left:1213.62px;top:883px;font-size:17px;line-height:24px;color:#6b6b6b;letter-spacing:0.019px;">Test Polydocs</div>
<div class="t " style="left:1399.24px;top:883px;font-size:17px;line-height:24px;color:#6b6b6b;letter-spacing:0.000px;">-</div>
<div class="t " style="left:1580.15px;top:883px;font-size:17px;line-height:24px;color:#6b6b6b;letter-spacing:-0.109px;">20.08.2025 10:52:50</div>
<div class="t " style="left:1777.24px;top:883px;font-size:17px;line-height:24px;color:#6b6b6b;letter-spacing:0.000px;">-</div>
<div class="t " style="left:1956.62px;top:883px;font-size:17px;line-height:24px;color:#6b6b6b;letter-spacing:-0.064px;">Test Polydocs</div>
<div class="t " style="left:205.87px;top:932px;font-size:17px;line-height:24px;color:#2689b0;letter-spacing:-0.399px;">move_email_after_im…</div>
<div class="t " style="left:490.21px;top:932px;font-size:17px;line-height:24px;color:#6b6b6b;letter-spacing:0.000px;">1</div>
<div class="a" style="left:550.7px;top:930.96px;width:147.2px;height:23.8px;background:#f89c33;border-radius:4px"></div>
<div class="t " style="left:559.52px;top:932px;font-size:15px;line-height:21px;color:#ffffff;letter-spacing:-0.204px;-webkit-text-stroke:0.5px #ffffff;">Ready for validation</div>
<div class="t " style="left:740.65px;top:932px;font-size:17px;line-height:24px;color:#6b6b6b;letter-spacing:-0.078px;">20.08.2025 10:52:15</div>
<div class="t " style="left:939.24px;top:932px;font-size:17px;line-height:24px;color:#6b6b6b;letter-spacing:0.000px;">-</div>
<div class="t " style="left:1086.43px;top:932px;font-size:17px;line-height:24px;color:#6b6b6b;letter-spacing:-0.007px;">Invoice</div>
<div class="t " style="left:1213.62px;top:932px;font-size:17px;line-height:24px;color:#6b6b6b;letter-spacing:0.019px;">Test Polydocs</div>
<div class="t " style="left:1399.24px;top:932px;font-size:17px;line-height:24px;color:#6b6b6b;letter-spacing:0.000px;">-</div>
<div class="t " style="left:1580.15px;top:932px;font-size:17px;line-height:24px;color:#6b6b6b;letter-spacing:-0.101px;">20.08.2025 10:52:29</div>
<div class="t " style="left:1777.24px;top:932px;font-size:17px;line-height:24px;color:#6b6b6b;letter-spacing:0.000px;">-</div>
<div class="t " style="left:1956.62px;top:932px;font-size:17px;line-height:24px;color:#6b6b6b;letter-spacing:-0.064px;">Test Polydocs</div>
<div class="t " style="left:206.74px;top:980px;font-size:17px;line-height:24px;color:#2689b0;letter-spacing:-0.374px;">test_google_client_20…</div>
<div class="t " style="left:490.21px;top:980px;font-size:17px;line-height:24px;color:#6b6b6b;letter-spacing:0.000px;">1</div>
<div class="a" style="left:550.7px;top:979.08px;width:147.2px;height:23.8px;background:#f89c33;border-radius:4px"></div>
<div class="t " style="left:559.52px;top:980px;font-size:15px;line-height:21px;color:#ffffff;letter-spacing:-0.204px;-webkit-text-stroke:0.5px #ffffff;">Ready for validation</div>
<div class="t " style="left:740.65px;top:980px;font-size:17px;line-height:24px;color:#6b6b6b;letter-spacing:-0.077px;">20.08.2025 10:52:13</div>
<div class="t " style="left:939.24px;top:980px;font-size:17px;line-height:24px;color:#6b6b6b;letter-spacing:0.000px;">-</div>
<div class="t " style="left:1086.43px;top:980px;font-size:17px;line-height:24px;color:#6b6b6b;letter-spacing:-0.007px;">Invoice</div>
<div class="t " style="left:1213.62px;top:980px;font-size:17px;line-height:24px;color:#6b6b6b;letter-spacing:0.019px;">Test Polydocs</div>
<div class="t " style="left:1399.24px;top:980px;font-size:17px;line-height:24px;color:#6b6b6b;letter-spacing:0.000px;">-</div>
<div class="t " style="left:1580.15px;top:980px;font-size:17px;line-height:24px;color:#6b6b6b;letter-spacing:-0.101px;">20.08.2025 10:52:29</div>
<div class="t " style="left:1777.24px;top:980px;font-size:17px;line-height:24px;color:#6b6b6b;letter-spacing:0.000px;">-</div>
<div class="t " style="left:1956.62px;top:980px;font-size:17px;line-height:24px;color:#6b6b6b;letter-spacing:-0.064px;">Test Polydocs</div>
<div class="t " style="left:206.74px;top:1028px;font-size:17px;line-height:24px;color:#2689b0;letter-spacing:-0.114px;">test_microsoft_client…</div>
<div class="t " style="left:490.21px;top:1028px;font-size:17px;line-height:24px;color:#6b6b6b;letter-spacing:0.000px;">1</div>
<div class="a" style="left:550.7px;top:1027.2px;width:147.2px;height:23.8px;background:#f89c33;border-radius:4px"></div>
<div class="t " style="left:559.52px;top:1028px;font-size:15px;line-height:21px;color:#ffffff;letter-spacing:-0.204px;-webkit-text-stroke:0.5px #ffffff;">Ready for validation</div>
<div class="t " style="left:740.65px;top:1028px;font-size:17px;line-height:24px;color:#6b6b6b;letter-spacing:-0.077px;">20.08.2025 10:51:53</div>
<div class="t " style="left:939.24px;top:1028px;font-size:17px;line-height:24px;color:#6b6b6b;letter-spacing:0.000px;">-</div>
<div class="t " style="left:1086.43px;top:1028px;font-size:17px;line-height:24px;color:#6b6b6b;letter-spacing:-0.007px;">Invoice</div>
<div class="t " style="left:1213.62px;top:1028px;font-size:17px;line-height:24px;color:#6b6b6b;letter-spacing:0.019px;">Test Polydocs</div>
<div class="t " style="left:1399.24px;top:1028px;font-size:17px;line-height:24px;color:#6b6b6b;letter-spacing:0.000px;">-</div>
<div class="t " style="left:1580.15px;top:1028px;font-size:17px;line-height:24px;color:#6b6b6b;letter-spacing:-0.044px;">20.08.2025 10:52:11</div>
<div class="t " style="left:1777.24px;top:1028px;font-size:17px;line-height:24px;color:#6b6b6b;letter-spacing:0.000px;">-</div>
<div class="t " style="left:1956.62px;top:1028px;font-size:17px;line-height:24px;color:#6b6b6b;letter-spacing:-0.064px;">Test Polydocs</div>
<svg class="i" width="2304" height="1159" style="clip-path:inset(0 0 102.5px 0)"><defs><g id="badge"><path d="M0.00 -11.80 L2.59 -9.66 L5.90 -10.22 L7.07 -7.07 L10.22 -5.90 L9.66 -2.59 L11.80 0.00 L9.66 2.59 L10.22 5.90 L7.07 7.07 L5.90 10.22 L2.59 9.66 L0.00 11.80 L-2.59 9.66 L-5.90 10.22 L-7.07 7.07 L-10.22 5.90 L-9.66 2.59 L-11.80 0.00 L-9.66 -2.59 L-10.22 -5.90 L-7.07 -7.07 L-5.90 -10.22 L-2.59 -9.66 Z" fill="#6f6f6f" stroke="#6f6f6f" stroke-width="1.2" stroke-linejoin="round"/><path d="M-6.5 0.2 L-1.9 4.8 L6.8 -3.9" fill="none" stroke="#f6f6f6" stroke-width="2.6" stroke-linecap="round" stroke-linejoin="round"/></g></defs><use href="#badge" x="2187" y="317.00"/><circle cx="2212.5" cy="317.00" r="2.4" fill="#6f6f6f"/><circle cx="2219.6" cy="317.00" r="2.4" fill="#6f6f6f"/><circle cx="2226.9" cy="317.00" r="2.4" fill="#6f6f6f"/><use href="#badge" x="2187" y="365.12"/><circle cx="2212.5" cy="365.12" r="2.4" fill="#6f6f6f"/><circle cx="2219.6" cy="365.12" r="2.4" fill="#6f6f6f"/><circle cx="2226.9" cy="365.12" r="2.4" fill="#6f6f6f"/><use href="#badge" x="2187" y="413.24"/><circle cx="2212.5" cy="413.24" r="2.4" fill="#6f6f6f"/><circle cx="2219.6" cy="413.24" r="2.4" fill="#6f6f6f"/><circle cx="2226.9" cy="413.24" r="2.4" fill="#6f6f6f"/><use href="#badge" x="2187" y="461.36"/><circle cx="2212.5" cy="461.36" r="2.4" fill="#6f6f6f"/><circle cx="2219.6" cy="461.36" r="2.4" fill="#6f6f6f"/><circle cx="2226.9" cy="461.36" r="2.4" fill="#6f6f6f"/><use href="#badge" x="2187" y="509.48"/><circle cx="2212.5" cy="509.48" r="2.4" fill="#6f6f6f"/><circle cx="2219.6" cy="509.48" r="2.4" fill="#6f6f6f"/><circle cx="2226.9" cy="509.48" r="2.4" fill="#6f6f6f"/><rect x="113" y="547.60" width="19.6" height="19.6" rx="2.6" fill="none" stroke="#7a7a7a" stroke-width="1.5"/><use href="#badge" x="2187" y="557.60"/><circle cx="2212.5" cy="557.60" r="2.4" fill="#6f6f6f"/><circle cx="2219.6" cy="557.60" r="2.4" fill="#6f6f6f"/><circle cx="2226.9" cy="557.60" r="2.4" fill="#6f6f6f"/><rect x="113" y="595.72" width="19.6" height="19.6" rx="2.6" fill="none" stroke="#7a7a7a" stroke-width="1.5"/><use href="#badge" x="2187" y="605.72"/><circle cx="2212.5" cy="605.72" r="2.4" fill="#6f6f6f"/><circle cx="2219.6" cy="605.72" r="2.4" fill="#6f6f6f"/><circle cx="2226.9" cy="605.72" r="2.4" fill="#6f6f6f"/><rect x="113" y="643.84" width="19.6" height="19.6" rx="2.6" fill="none" stroke="#7a7a7a" stroke-width="1.5"/><use href="#badge" x="2187" y="653.84"/><circle cx="2212.5" cy="653.84" r="2.4" fill="#6f6f6f"/><circle cx="2219.6" cy="653.84" r="2.4" fill="#6f6f6f"/><circle cx="2226.9" cy="653.84" r="2.4" fill="#6f6f6f"/><rect x="113" y="691.96" width="19.6" height="19.6" rx="2.6" fill="none" stroke="#7a7a7a" stroke-width="1.5"/><use href="#badge" x="2187" y="701.96"/><circle cx="2212.5" cy="701.96" r="2.4" fill="#6f6f6f"/><circle cx="2219.6" cy="701.96" r="2.4" fill="#6f6f6f"/><circle cx="2226.9" cy="701.96" r="2.4" fill="#6f6f6f"/><rect x="113" y="740.08" width="19.6" height="19.6" rx="2.6" fill="none" stroke="#7a7a7a" stroke-width="1.5"/><use href="#badge" x="2187" y="750.08"/><circle cx="2212.5" cy="750.08" r="2.4" fill="#6f6f6f"/><circle cx="2219.6" cy="750.08" r="2.4" fill="#6f6f6f"/><circle cx="2226.9" cy="750.08" r="2.4" fill="#6f6f6f"/><rect x="113" y="788.20" width="19.6" height="19.6" rx="2.6" fill="none" stroke="#7a7a7a" stroke-width="1.5"/><use href="#badge" x="2187" y="798.20"/><circle cx="2212.5" cy="798.20" r="2.4" fill="#6f6f6f"/><circle cx="2219.6" cy="798.20" r="2.4" fill="#6f6f6f"/><circle cx="2226.9" cy="798.20" r="2.4" fill="#6f6f6f"/><rect x="113" y="836.32" width="19.6" height="19.6" rx="2.6" fill="none" stroke="#7a7a7a" stroke-width="1.5"/><use href="#badge" x="2187" y="846.32"/><circle cx="2212.5" cy="846.32" r="2.4" fill="#6f6f6f"/><circle cx="2219.6" cy="846.32" r="2.4" fill="#6f6f6f"/><circle cx="2226.9" cy="846.32" r="2.4" fill="#6f6f6f"/><rect x="113" y="884.44" width="19.6" height="19.6" rx="2.6" fill="none" stroke="#7a7a7a" stroke-width="1.5"/><use href="#badge" x="2187" y="894.44"/><circle cx="2212.5" cy="894.44" r="2.4" fill="#6f6f6f"/><circle cx="2219.6" cy="894.44" r="2.4" fill="#6f6f6f"/><circle cx="2226.9" cy="894.44" r="2.4" fill="#6f6f6f"/><rect x="113" y="932.56" width="19.6" height="19.6" rx="2.6" fill="none" stroke="#7a7a7a" stroke-width="1.5"/><use href="#badge" x="2187" y="942.56"/><circle cx="2212.5" cy="942.56" r="2.4" fill="#6f6f6f"/><circle cx="2219.6" cy="942.56" r="2.4" fill="#6f6f6f"/><circle cx="2226.9" cy="942.56" r="2.4" fill="#6f6f6f"/><rect x="113" y="980.68" width="19.6" height="19.6" rx="2.6" fill="none" stroke="#7a7a7a" stroke-width="1.5"/><use href="#badge" x="2187" y="990.68"/><circle cx="2212.5" cy="990.68" r="2.4" fill="#6f6f6f"/><circle cx="2219.6" cy="990.68" r="2.4" fill="#6f6f6f"/><circle cx="2226.9" cy="990.68" r="2.4" fill="#6f6f6f"/><rect x="113" y="1028.80" width="19.6" height="19.6" rx="2.6" fill="none" stroke="#7a7a7a" stroke-width="1.5"/><use href="#badge" x="2187" y="1038.80"/><circle cx="2212.5" cy="1038.80" r="2.4" fill="#6f6f6f"/><circle cx="2219.6" cy="1038.80" r="2.4" fill="#6f6f6f"/><circle cx="2226.9" cy="1038.80" r="2.4" fill="#6f6f6f"/></svg>
<div class="a" style="left:95px;top:1056.5px;width:2185px;height:57.8px;background:#ffffff;"></div>
<div class="a" style="left:2040px;top:1057px;width:1px;height:57.3px;background:#e0e0e0;"></div>
<div class="t " style="left:1795.15px;top:1073px;font-size:16.5px;line-height:24px;color:#6b6b6b;letter-spacing:0.126px;">Documents per Page:</div>
<div class="t " style="left:1964.84px;top:1073px;font-size:16.5px;line-height:24px;color:#222222;letter-spacing:-0.048px;">50</div>
<svg class="i" width="2304" height="1159"><path fill="#6b6b6b" d="M1999.6 1082.7 H2011.3 L2005.45 1089.7 Z"/><path d="M2069.8 1078.2 V1093 M2084 1079 L2077.2 1085.6 L2084 1092.2" fill="none" stroke="#56a9c9" stroke-width="2.2"/><path d="M2116.5 1079 L2109.7 1085.6 L2116.5 1092.2" fill="none" stroke="#56a9c9" stroke-width="2.2"/><path d="M2204.9 1079 L2211.7 1085.6 L2204.9 1092.2" fill="none" stroke="#2089b0" stroke-width="2.2"/><path d="M2237 1079 L2243.8 1085.6 L2237 1092.2 M2250.3 1078.2 V1093" fill="none" stroke="#2089b0" stroke-width="2.2"/></svg>
<div class="t " style="left:2141.74px;top:1073px;font-size:16.5px;line-height:24px;color:#6b6b6b;letter-spacing:1.034px;">1 / 4</div>
<div class="a" style="left:105px;top:1140px;width:2165px;height:1px;background:#d9d9d9;"></div>
<div class="t " style="left:357.28px;top:306px;font-size:17px;line-height:24px;color:#2689b0;letter-spacing:-4.925px;">e…</div>
<div class="t " style="left:357.28px;top:354px;font-size:17px;line-height:24px;color:#2689b0;letter-spacing:-4.425px;">e…</div>
<div class="t " style="left:357.28px;top:402px;font-size:17px;line-height:24px;color:#2689b0;letter-spacing:-4.925px;">e…</div>
<div class="t " style="left:360.24px;top:450px;font-size:17px;line-height:24px;color:#2689b0;letter-spacing:-4.658px;">t…</div>
<div class="t " style="left:358.24px;top:499px;font-size:17px;line-height:24px;color:#2689b0;letter-spacing:-4.658px;">t…</div>
<div class="a" style="left:95px;top:178px;width:270px;height:355px;background:#ffffff;border-radius:5px;box-shadow:0 2px 5px rgba(0,0,0,0.28)"></div>
<div class="a" style="left:114.5px;top:190.4px;width:230.3px;height:47.3px;background:#ffffff;border:1px solid #c9c9c9;border-radius:4px"></div>
<div class="t " style="left:128.25px;top:202px;font-size:16.5px;line-height:24px;color:#6d6d6d;letter-spacing:0.171px;">Search by name or Id...</div>
<div class="a" style="left:95px;top:250.5px;width:270px;height:1.5px;background:#e8e8e8;"></div>
<div class="a" style="left:114.5px;top:338px;width:230.8px;height:1px;background:#e3e3e3;"></div>
<div class="a" style="left:114.5px;top:426px;width:230.8px;height:1px;background:#e3e3e3;"></div>
<div class="t " style="left:140.64px;top:262px;font-size:17px;line-height:24px;color:#151515;letter-spacing:-0.256px;">Create new Dashboard</div>
<div class="t " style="left:140.11px;top:305px;font-size:17px;line-height:24px;color:#151515;letter-spacing:-0.048px;">Default Dashboard</div>
<div class="t " style="left:140.73px;top:350px;font-size:17px;line-height:24px;color:#151515;letter-spacing:-0.358px;">Save Dashboard Changes</div>
<div class="t " style="left:140.11px;top:393px;font-size:17px;line-height:24px;color:#151515;letter-spacing:-0.186px;">Rename current Dashboard</div>
<div class="t " style="left:140.11px;top:457px;font-size:17px;line-height:24px;color:#2689b0;letter-spacing:-0.136px;">My-Dashboard</div>
<div class="t " style="left:140.73px;top:500px;font-size:17px;line-height:24px;color:#151515;letter-spacing:-0.289px;">Shared Dashbaord</div>
<svg class="i" width="2304" height="1159"><path d="M122.85 265.6 V280.8 M115.2 273.2 H130.6" fill="none" stroke="#6f6f6f" stroke-width="2.9" stroke-linecap="round"/><circle cx="122.8" cy="312.3" r="3.9" fill="#6f6f6f"/><path fill="#6f6f6f" d="M115.4 324.8 a7.4 7.6 0 0 1 14.7 0 Z"/><path fill="#6f6f6f" d="M114.5 369.2 L115.6 364 L126.6 353 a1.2 1.2 0 0 1 1.7 0 L130.9 355.6 a1.2 1.2 0 0 1 0 1.7 L119.9 368.3 Z"/><path d="M125.2 354.6 L129.3 358.7" stroke="#fff" stroke-width="1"/><rect x="114.5" y="399" width="16.9" height="10.4" rx="1" fill="#6f6f6f"/><rect x="115.90" y="400.6" width="1.4" height="1.3" fill="#fff"/><rect x="118.35" y="400.6" width="1.4" height="1.3" fill="#fff"/><rect x="120.80" y="400.6" width="1.4" height="1.3" fill="#fff"/><rect x="123.25" y="400.6" width="1.4" height="1.3" fill="#fff"/><rect x="125.70" y="400.6" width="1.4" height="1.3" fill="#fff"/><rect x="128.15" y="400.6" width="1.4" height="1.3" fill="#fff"/><rect x="115.90" y="402.9" width="1.4" height="1.3" fill="#fff"/><rect x="118.35" y="402.9" width="1.4" height="1.3" fill="#fff"/><rect x="120.80" y="402.9" width="1.4" height="1.3" fill="#fff"/><rect x="123.25" y="402.9" width="1.4" height="1.3" fill="#fff"/><rect x="125.70" y="402.9" width="1.4" height="1.3" fill="#fff"/><rect x="128.15" y="402.9" width="1.4" height="1.3" fill="#fff"/><rect x="115.90" y="405.2" width="1.4" height="1.3" fill="#fff"/><rect x="118.35" y="405.2" width="1.4" height="1.3" fill="#fff"/><rect x="120.80" y="405.2" width="1.4" height="1.3" fill="#fff"/><rect x="123.25" y="405.2" width="1.4" height="1.3" fill="#fff"/><rect x="125.70" y="405.2" width="1.4" height="1.3" fill="#fff"/><rect x="128.15" y="405.2" width="1.4" height="1.3" fill="#fff"/><rect x="117.8" y="407.3" width="10.3" height="1.2" fill="#fff"/><path fill="#6f6f6f" d="M114.3 461.2 a0.6 0.6 0 0 1 0.6 -0.6 H130.6 a0.6 0.6 0 0 1 0.45 1 L124.6 468.6 V474.5 a0.8 0.8 0 0 1 -1.2 0.6 L121.4 473.5 a0.8 0.8 0 0 1 -0.4 -0.7 V468.6 L114.5 461.6 Z"/><path d="M127.5 507.2 L119.2 511.6 L127.5 516" fill="none" stroke="#6f6f6f" stroke-width="1.5"/><circle cx="127.6" cy="506.6" r="1.9" fill="#6f6f6f"/><circle cx="118.6" cy="511.6" r="1.9" fill="#6f6f6f"/><circle cx="127.6" cy="516.6" r="1.9" fill="#6f6f6f"/><path fill="#00ffff" d="M343.9 360.4 L388.9 338 V356 H516.2 V365.2 H388.9 V382.7 Z"/></svg>
</body></html>
